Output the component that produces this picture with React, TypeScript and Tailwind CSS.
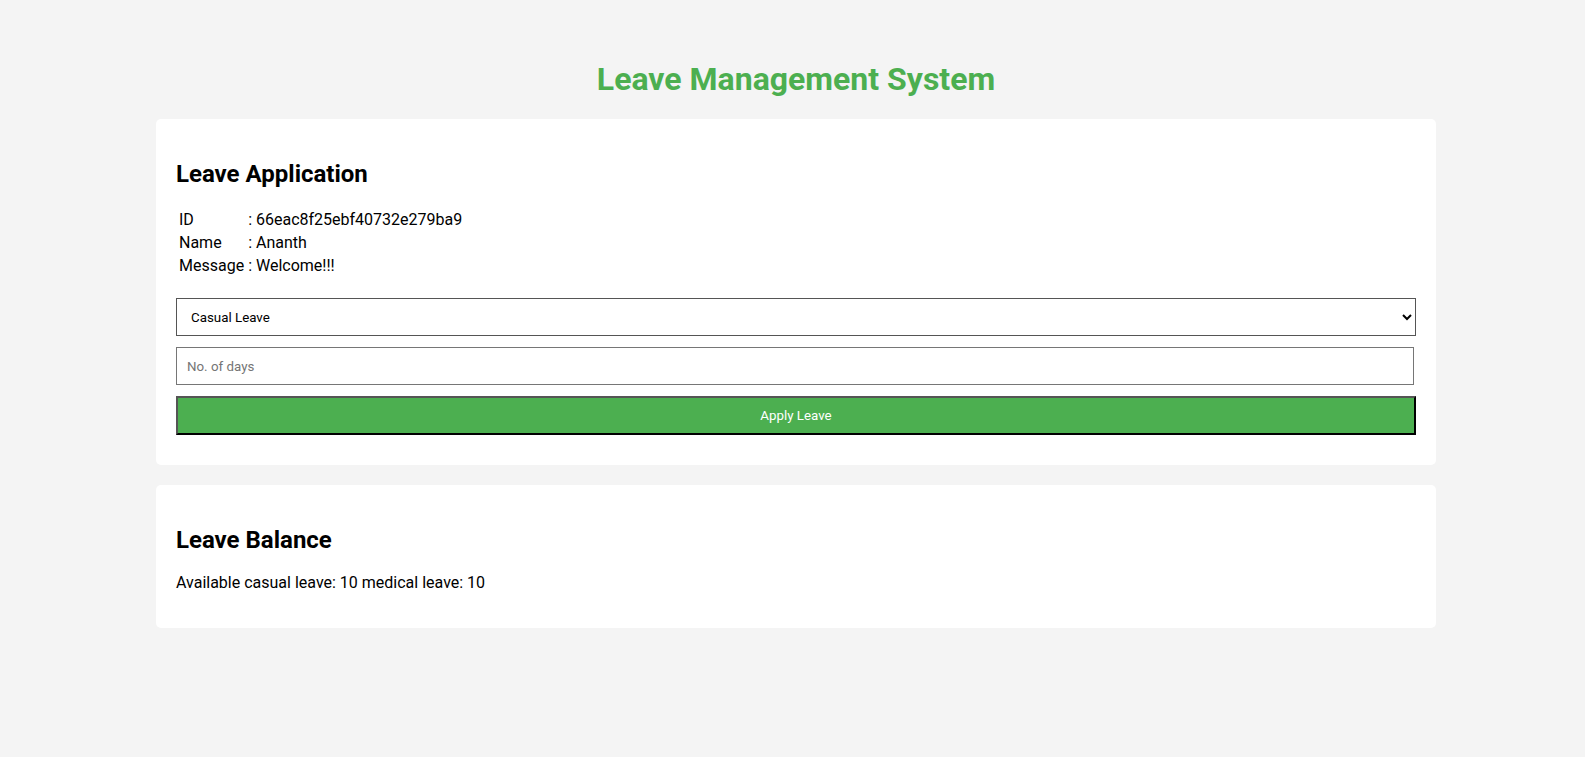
import { useState } from 'react';

const user = {
  id: '66eac8f25ebf40732e279ba9',
  name: 'Ananth',
  message: 'Welcome!!!'
};

export default function App() {
  const [leaveType, setLeaveType] = useState('casual');
  const [days, setDays] = useState('');

  const cardStyle = 'bg-white rounded-[5px] px-5 pt-5';

  return (
    <div className="min-h-screen bg-[#f4f4f4] font-['Roboto',sans-serif] text-black leading-[normal]">
      <div className="w-[1280px] ml-[156px] pt-[60px]">
        <h1 className="text-center text-[32px] leading-[normal] font-bold text-[#4caf50]">
          Leave Management System
        </h1>

        <div className={`${cardStyle} mt-[21px] pb-[30px]`}>
          <h2 className="mt-[21px] mb-[19px] text-2xl leading-[normal] font-bold">
            Leave Application
          </h2>
          <table className="border-separate border-spacing-[2px] text-base leading-[normal]">
            <tbody>
              <tr>
                <td className="p-px">ID</td>
                <td className="p-px">: {user.id}</td>
              </tr>
              <tr>
                <td className="p-px">Name</td>
                <td className="p-px">: {user.name}</td>
              </tr>
              <tr>
                <td className="p-px">Message</td>
                <td className="p-px">: {user.message}</td>
              </tr>
            </tbody>
          </table>

          <form
            className="flex flex-col gap-[11px] mt-5 text-[13.33px] leading-[normal]"
            onSubmit={e => e.preventDefault()}
          >
            <select
              value={leaveType}
              onChange={e => setLeaveType(e.target.value)}
              className="w-full h-[38px] px-[10px] border border-[#555] bg-white"
            >
              <option value="casual">Casual Leave</option>
              <option value="medical">Medical Leave</option>
            </select>
            <input
              type="number"
              value={days}
              onChange={e => setDays(e.target.value)}
              placeholder="No. of days"
              className="w-[1238px] h-[38px] p-[10px] border border-[#767676] bg-white placeholder:text-[#757575]"
            />
            <button
              type="submit"
              className="w-full h-[39px] bg-[#4caf50] text-white font-normal border-2 border-t-[#555] border-l-[#555] border-r-black border-b-black"
            >
              Apply Leave
            </button>
          </form>
        </div>

        <div className={`${cardStyle} mt-5 pb-[20px]`}>
          <h2 className="mt-[21px] mb-[19px] text-2xl leading-[normal] font-bold">
            Leave Balance
          </h2>
          <p className="my-4 text-base leading-[normal]">
            Available casual leave: 10 medical leave: 10
          </p>
        </div>
      </div>
    </div>
  );
}
